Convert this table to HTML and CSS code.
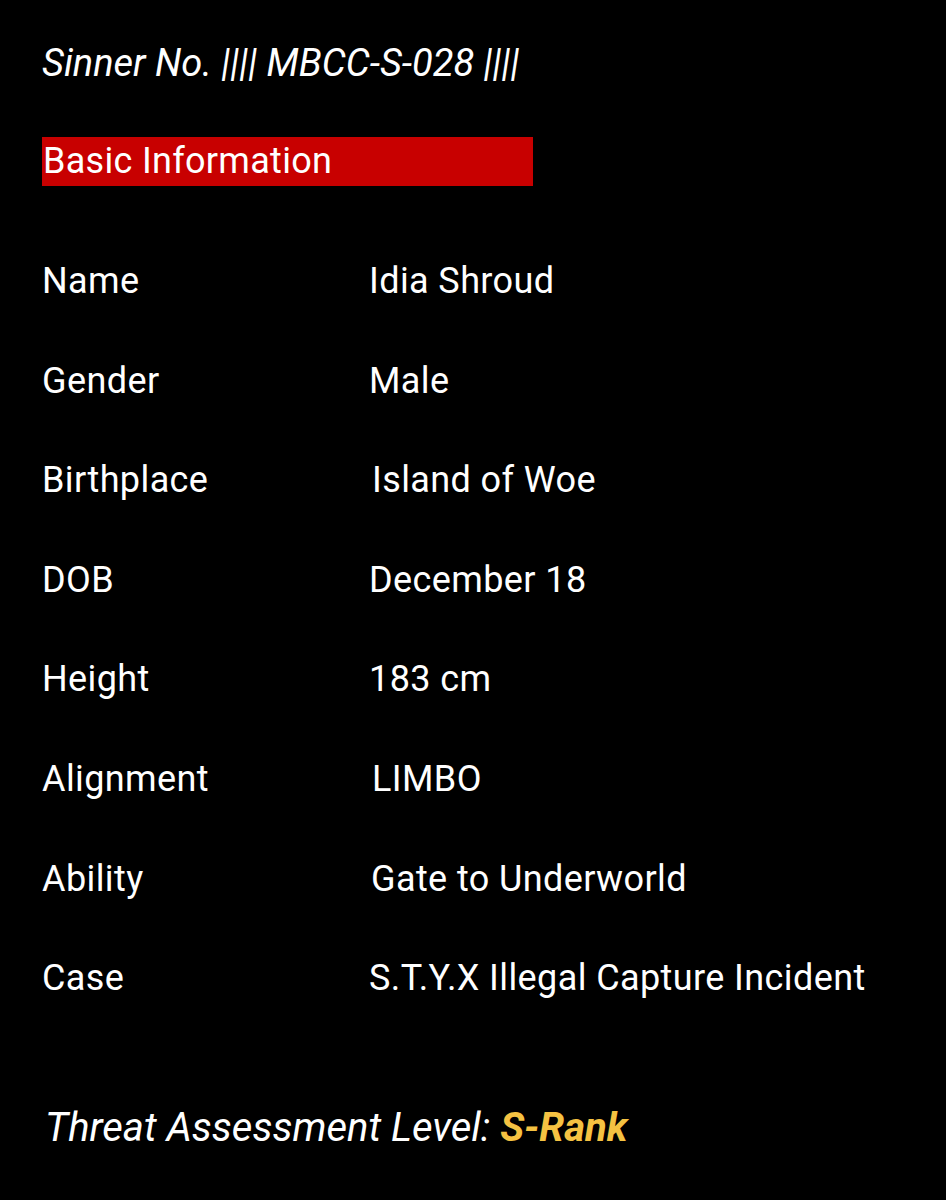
FILE: index.html
```html
<!DOCTYPE html>
<html lang="en">
<head>
<meta charset="utf-8">
<title>Sinner Profile</title>
<link rel="stylesheet" href="styles.css">
</head>
<body>
<main class="sheet">
  <h1 class="sinner-no">Sinner No. |||| MBCC-S-028 ||||</h1>
  <h2 class="section-bar">Basic Information</h2>
  <dl class="info">
    <div class="row"><dt>Name</dt><dd>Idia Shroud</dd></div>
    <div class="row"><dt>Gender</dt><dd>Male</dd></div>
    <div class="row"><dt>Birthplace</dt><dd class="nudge-3">Island of Woe</dd></div>
    <div class="row"><dt>DOB</dt><dd>December 18</dd></div>
    <div class="row"><dt>Height</dt><dd>183 cm</dd></div>
    <div class="row"><dt>Alignment</dt><dd class="nudge-3">LIMBO</dd></div>
    <div class="row"><dt>Ability</dt><dd class="nudge-2">Gate to Underworld</dd></div>
    <div class="row"><dt>Case</dt><dd>S.T.Y.X Illegal Capture Incident</dd></div>
  </dl>
  <p class="threat">Threat Assessment Level: <span class="rank">S-Rank</span></p>
</main>
</body>
</html>
```
FILE: styles.css
```css
html, body {
  margin: 0;
  padding: 0;
  background: #000;
}
body {
  color: #fff;
  font-family: Roboto, "Noto Sans", sans-serif;
  width: 946px;
  height: 1200px;
  overflow: hidden;
}
.sheet {
  padding: 42px 0 0 42px;
  display: flex;
  flex-direction: column;
}
.sinner-no {
  margin: 0;
  font-size: 38px;
  font-weight: 400;
  font-style: italic;
  line-height: 42px;
}
.section-bar {
  margin: 53px 0 0 0;
  width: 491px;
  height: 49px;
  background: #c80000;
  font-size: 36px;
  font-weight: 400;
  line-height: 49px;
  letter-spacing: 0.3px;
  padding-left: 1px;
  box-sizing: border-box;
}
.info {
  margin: 74px 0 0 0;
  display: flex;
  flex-direction: column;
}
.row {
  display: grid;
  grid-template-columns: 327px 1fr;
  height: 99.6px;
  align-items: start;
}
.row dt, .row dd {
  margin: 0;
  font-size: 36px;
  line-height: 42px;
  letter-spacing: 0.4px;
}
.row dd.nudge-2 { padding-left: 2px; }
.row dd.nudge-3 { padding-left: 3px; }
.threat {
  margin: 47px 0 0 3px;
  font-size: 40px;
  font-style: italic;
  line-height: 48px;
}
.rank {
  color: #f5c242;
  font-weight: 700;
}
```
